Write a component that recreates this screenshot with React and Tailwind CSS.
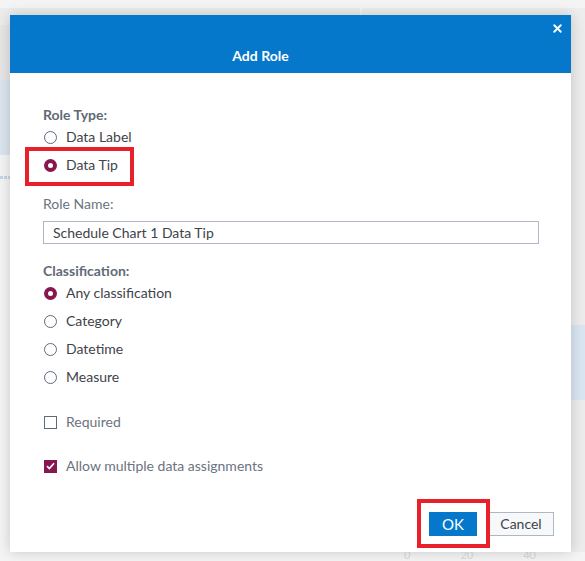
import { X } from "lucide-react";

function Radio({ checked }) {
  return checked ? (
    <span className="flex h-[13px] w-[13px] shrink-0 items-center justify-center rounded-full bg-[#86174f]">
      <span className="h-[5px] w-[5px] rounded-full bg-white" />
    </span>
  ) : (
    <span className="h-[13px] w-[13px] shrink-0 rounded-full border-[1.5px] border-[#5f6b7a] bg-white" />
  );
}

function Check({ checked }) {
  return checked ? (
    <span className="flex h-[13px] w-[13px] shrink-0 items-center justify-center bg-[#86174f]">
      <svg width="9" height="8" viewBox="0 0 9 8">
        <path d="M1 4.2 L3.4 6.5 L8 1.3" fill="none" stroke="white" strokeWidth="1.7" />
      </svg>
    </span>
  ) : (
    <span className="h-[13px] w-[13px] shrink-0 border-[1.5px] border-[#5f6b7a] bg-white" />
  );
}

function Option({ children, checked, box, faded }) {
  return (
    <div className="flex h-5 items-center gap-[9px] pl-[1px]">
      {box ? <Check checked={checked} /> : <Radio checked={checked} />}
      <span className={faded ? "text-[#6c7380]" : "text-[#40434a]"}>{children}</span>
    </div>
  );
}

export default function App() {
  return (
    <div
      className="relative h-[561px] w-[585px] overflow-hidden bg-[#f4f4f4] text-[14px]"
      style={{ fontFamily: "Lato, 'Open Sans', sans-serif" }}
    >
      {/* app behind the modal */}
      <div className="absolute left-0 top-[8px] h-[17px] w-[360px] bg-[#ececec]" />
      <div className="absolute left-[362px] top-[8px] h-[17px] w-[223px] bg-[#ededed]" />
      <div className="absolute left-0 top-[25px] h-[55px] w-[10px] bg-[#e6e6e6]" />
      <div className="absolute left-0 top-[80px] h-[75px] w-[10px] bg-[#dbe5ee]" />
      <div className="absolute left-0 top-[176px] flex gap-[1px]">
        <span className="h-[3px] w-[3px] bg-[#c5d5e6]" />
        <span className="h-[3px] w-[3px] bg-[#c5d5e6]" />
        <span className="h-[3px] w-[3px] bg-[#c5d5e6]" />
      </div>
      <div className="absolute left-[571px] top-[25px] h-[527px] w-[14px] bg-[#ececec]" />
      <div className="absolute left-[571px] top-[325px] h-[75px] w-[14px] bg-[#d9e5f0]" />
      <div className="absolute left-[404px] top-[549px] flex gap-[50px] text-[11px] leading-[12px] text-[#d8d8d8]">
        <span>0</span>
        <span>20</span>
        <span>40</span>
      </div>

      {/* dialog */}
      <div className="absolute left-[10px] top-[15px] flex h-[537px] w-[561px] flex-col bg-white shadow-[0_0_12px_rgba(0,0,0,0.18)]">
        <div className="relative h-[58px] bg-[#0578cc] pr-[60px] pt-[31px] text-center text-[14px] font-bold leading-5 text-white">
          Add Role
          <X className="absolute right-[7px] top-[7px] h-[13px] w-[13px]" strokeWidth={3.5} color="white" />
        </div>

        <div className="flex flex-1 flex-col pl-[33px] pr-[32px] pt-[32px] leading-5">
          <div className="font-bold text-[#626a77]">Role Type:</div>
          <div className="mt-[2px]">
            <Option>Data Label</Option>
          </div>
          <div className="relative mt-[8px] w-fit">
            <Option checked>Data Tip</Option>
            <div className="absolute -bottom-[11px] -left-[18px] -right-[16px] -top-[8px] border-4 border-[#e8202a]" />
          </div>

          <div className="mt-[19px] text-[#6b7482]">Role Name:</div>
          <div className="mt-[7px] flex h-[23px] w-[496px] items-center border border-[#aeb7c4] pl-[9px] text-[#40434a]">
            Schedule Chart 1 Data Tip
          </div>

          <div className="mt-[17px] font-bold text-[#626a77]">Classification:</div>
          <div className="mt-[2px] flex flex-col gap-[8px]">
            <Option checked>Any classification</Option>
            <Option>Category</Option>
            <Option>Datetime</Option>
            <Option>Measure</Option>
          </div>

          <div className="mt-[25px]">
            <Option box faded>Required</Option>
          </div>
          <div className="mt-[24px]">
            <Option box checked faded>Allow multiple data assignments</Option>
          </div>

          <div className="mt-[36px] flex justify-end gap-[11px]">
            <div className="relative">
              <button className="h-[24px] w-[48px] bg-[#0578cc] text-[15px] text-white">OK</button>
              <div className="absolute -bottom-[12px] -left-[12px] -right-[13px] -top-[13px] border-4 border-[#e8202a]" />
            </div>
            <button className="mr-[-15px] h-[24px] w-[66px] border border-[#aeb7c4] bg-[#f7f8fa] text-[14px] text-[#40434a]">
              Cancel
            </button>
          </div>
        </div>
      </div>
    </div>
  );
}
